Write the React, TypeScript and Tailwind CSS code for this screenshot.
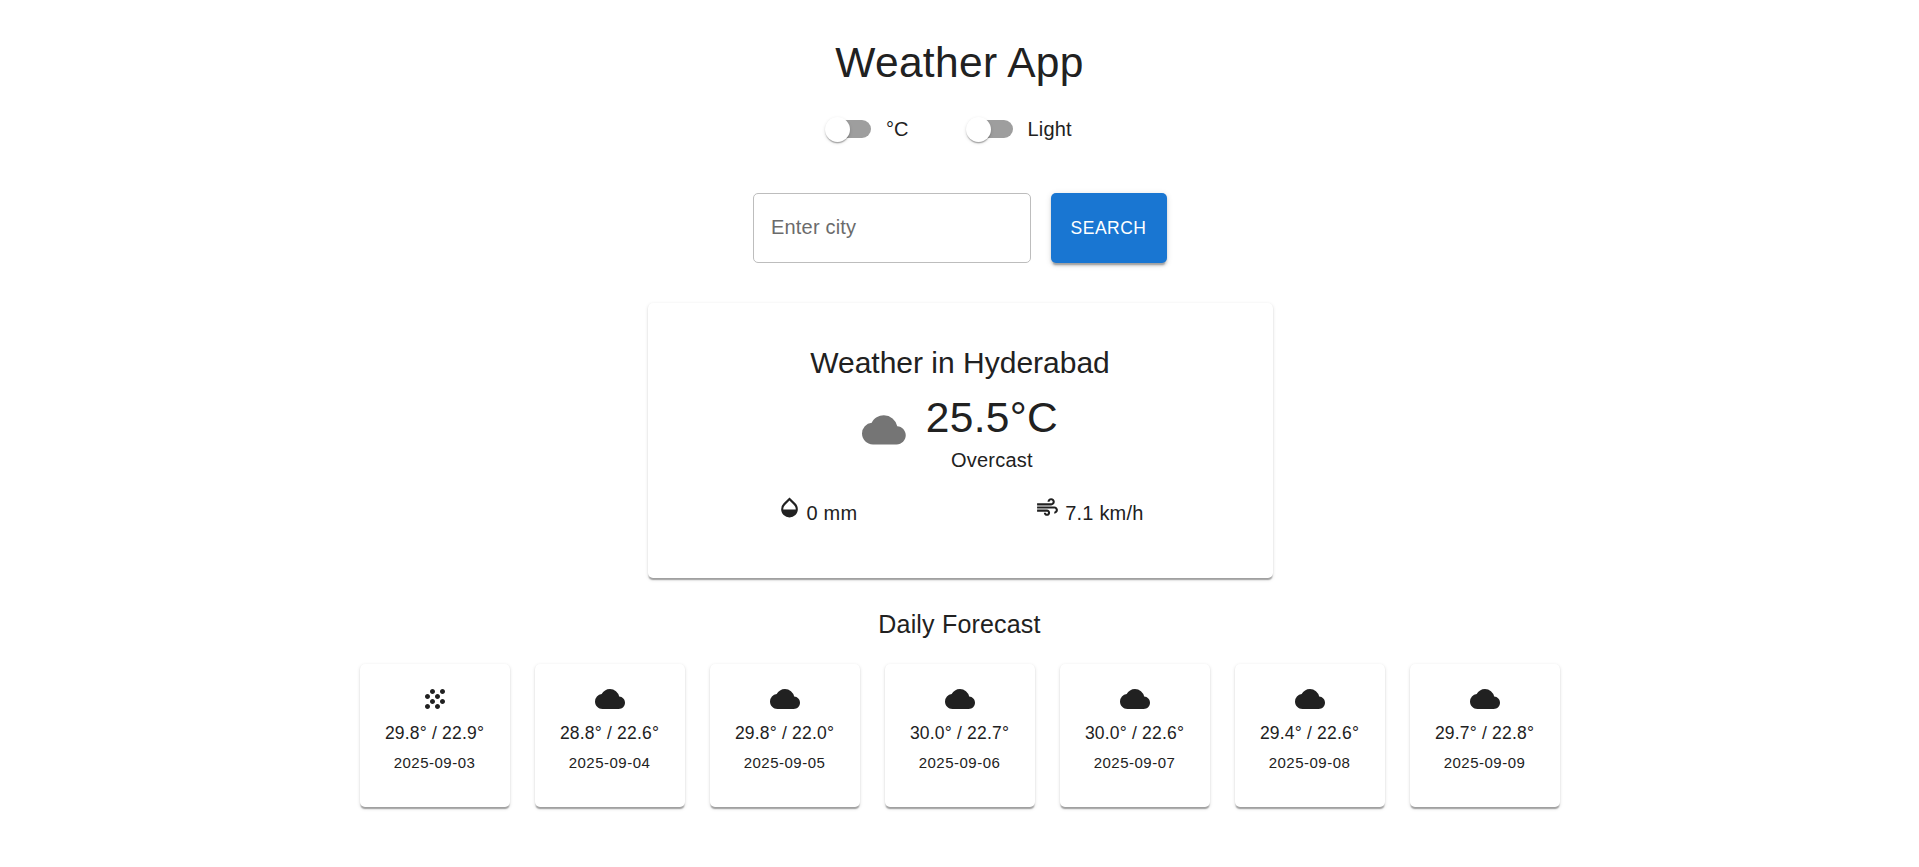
import { MdAir, MdCloud, MdGrain, MdOpacity } from "react-icons/md";

const forecast = [
  { grain: true, temp: "29.8° / 22.9°", date: "2025-09-03" },
  { grain: false, temp: "28.8° / 22.6°", date: "2025-09-04" },
  { grain: false, temp: "29.8° / 22.0°", date: "2025-09-05" },
  { grain: false, temp: "30.0° / 22.7°", date: "2025-09-06" },
  { grain: false, temp: "30.0° / 22.6°", date: "2025-09-07" },
  { grain: false, temp: "29.4° / 22.6°", date: "2025-09-08" },
  { grain: false, temp: "29.7° / 22.8°", date: "2025-09-09" },
];

const cardShadow =
  "shadow-[0_2.5px_1.25px_-1.25px_rgba(0,0,0,0.2),0_1.25px_1.25px_0_rgba(0,0,0,0.14),0_1.25px_3.75px_0_rgba(0,0,0,0.12)]";

function Toggle({ label }: { label: string }) {
  return (
    <label className="mr-[20px] ml-[-13.75px] flex items-center">
      <span className="flex h-[47.5px] w-[72.5px] items-center justify-center">
        <span className="relative h-[17.5px] w-[42.5px] rounded-full bg-[#9e9e9e]">
          <span className="absolute top-[-3.75px] left-[-3.75px] h-[25px] w-[25px] rounded-full bg-white shadow-[0_2.5px_1.25px_-1.25px_rgba(0,0,0,0.2),0_1.25px_1.25px_0_rgba(0,0,0,0.14),0_1.25px_3.75px_0_rgba(0,0,0,0.12)]" />
        </span>
      </span>
      <span className="text-[20px] leading-[1.5] tracking-[0.00938em]">{label}</span>
    </label>
  );
}

function ForecastCard({ grain, temp, date }: { grain: boolean; temp: string; date: string }) {
  return (
    <div className={`flex h-[143px] w-[150px] flex-col items-center rounded-[5px] bg-white pt-[20px] ${cardShadow}`}>
      {grain ? <MdGrain size={30} className="text-[#212121]" /> : <MdCloud size={30} className="text-[#212121]" />}
      <p className="mt-[7.5px] text-[17.5px] leading-[1.43] tracking-[0.01071em]">{temp}</p>
      <p className="mt-[5px] text-[15px] leading-[1.66] tracking-[0.03333em]">{date}</p>
    </div>
  );
}

export default function App() {
  return (
    <div className="flex min-h-[867px] flex-col items-center bg-white pt-[37px] font-['Liberation_Sans',Arial,sans-serif] text-[#212121]">
      <h1 className="text-[42.5px] leading-[52.5px] font-normal tracking-[0.00735em]">Weather App</h1>

      <div className="mt-[15.75px] flex h-[47.5px] items-center gap-[40px]">
        <Toggle label="°C" />
        <Toggle label="Light" />
      </div>

      <div className="mt-[40px] flex h-[70px] gap-[20px]">
        <input
          placeholder="Enter city"
          className="h-[70px] w-[278px] rounded-[5px] border border-[#bdbdbd] px-[17.5px] text-[20px] tracking-[0.00938em] outline-none placeholder:text-[#6b6b6b]"
        />
        <button className="h-[70px] w-[116px] rounded-[5px] bg-[#1976d2] text-[17.5px] font-medium tracking-[0.02857em] text-white shadow-[0_3.75px_1.25px_-2.5px_rgba(0,0,0,0.2),0_2.5px_2.5px_0_rgba(0,0,0,0.14),0_1.25px_6.25px_0_rgba(0,0,0,0.12)]">
          SEARCH
        </button>
      </div>

      <div className={`mt-[40px] ml-[1px] flex h-[275px] w-[625px] flex-col items-center rounded-[5px] bg-white px-[40px] pt-[40px] ${cardShadow}`}>
        <h2 className="text-[30px] leading-[1.334] font-normal">Weather in Hyderabad</h2>
        <div className="mt-[9px] flex items-start gap-[20px]">
          <MdCloud size={43.75} className="mt-[15.75px] text-[#757575]" />
          <div className="flex flex-col items-center">
            <p className="text-[42.5px] leading-[1.235] tracking-[0.00735em]">25.5°C</p>
            <p className="mt-[0.5px] text-[20px] leading-[1.5] tracking-[0.00938em]">Overcast</p>
          </div>
        </div>
        <div className="mt-[20.5px] flex w-full justify-around">
          <p className="text-[20px] leading-[1.5] tracking-[0.00938em]">
            <MdOpacity size={25} className="mr-[5px] inline-block align-baseline" />0 mm
          </p>
          <p className="text-[20px] leading-[1.5] tracking-[0.00938em]">
            <MdAir size={25} className="mr-[5px] inline-block align-baseline" />7.1 km/h
          </p>
        </div>
      </div>

      <h3 className="mt-[26px] text-[25px] leading-[1.6] font-normal tracking-[0.0075em]">Daily Forecast</h3>

      <div className="mt-[20px] flex gap-[25px]">
        {forecast.map((day) => (
          <ForecastCard key={day.date} {...day} />
        ))}
      </div>
    </div>
  );
}
